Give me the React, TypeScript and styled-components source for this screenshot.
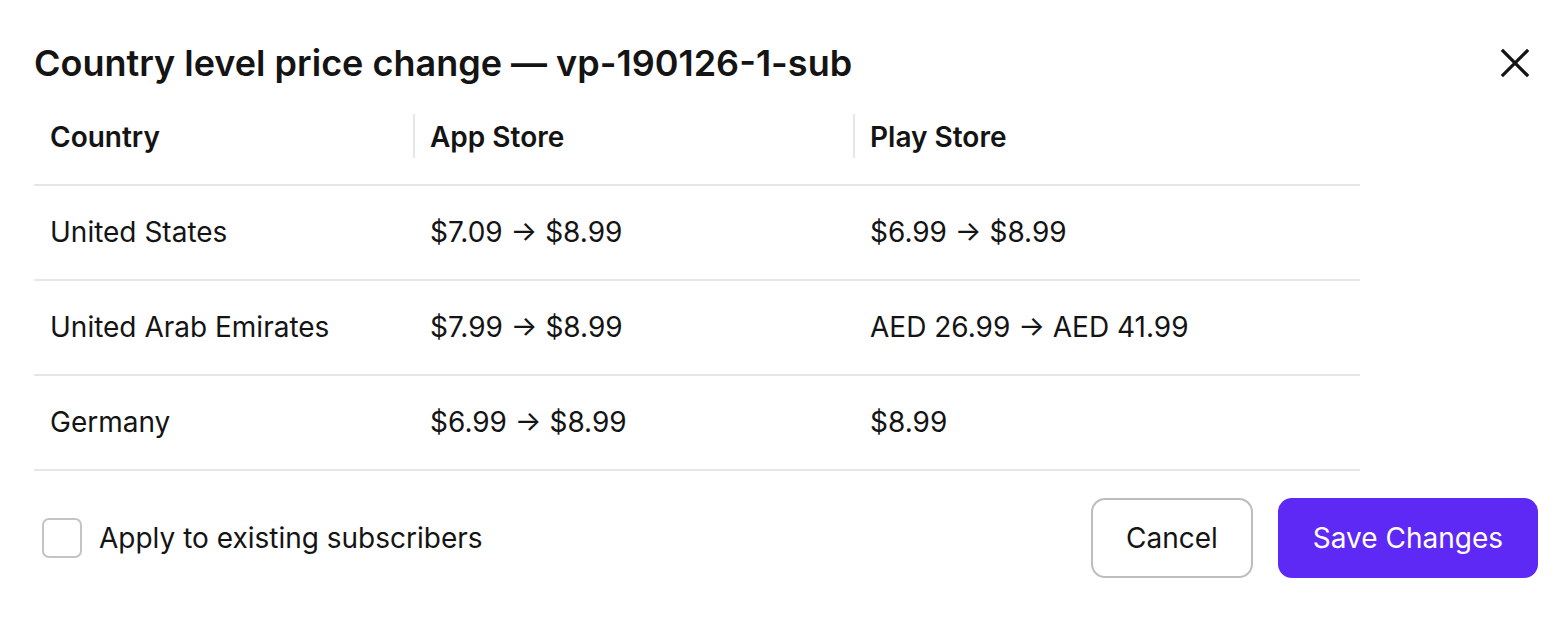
import styled, { createGlobalStyle } from "styled-components";
import { Fragment } from "react";

const GlobalStyle = createGlobalStyle`
  * { box-sizing: border-box; }
  body {
    margin: 0;
    background: #ffffff;
    font-family: Inter, "Noto Sans", sans-serif;
    color: #141414;
  }
`;

const Dialog = styled.div`
  width: 1568px;
  height: 618px;
  padding: 36px 30px 0 34px;
  display: flex;
  flex-direction: column;
`;

const Header = styled.div`
  display: flex;
  align-items: center;
  justify-content: space-between;
  height: 54px;
`;

const Title = styled.h1`
  margin: 0;
  font-size: 36px;
  font-weight: 600;
  color: #141414;
`;

const CloseButton = styled.button`
  border: none;
  background: none;
  padding: 0;
  width: 34px;
  height: 34px;
  margin-right: 6px;
  display: flex;
  align-items: center;
  justify-content: center;
  cursor: pointer;
  color: #141414;
`;

const Table = styled.div`
  width: 1326px;
  display: grid;
  grid-template-columns: 379px 440px 507px;
`;

const HeadCell = styled.div<{ $divider?: boolean }>`
  position: relative;
  height: 96px;
  display: flex;
  align-items: center;
  padding-left: ${(p) => (p.$divider ? "17px" : "16px")};
  font-size: 28px;
  font-weight: 600;
  border-bottom: 2px solid #e6e6e6;

  &::before {
    content: "";
    display: ${(p) => (p.$divider ? "block" : "none")};
    position: absolute;
    left: 0;
    top: 24px;
    height: 44px;
    width: 2px;
    background: #e6e6e6;
  }
`;

const Cell = styled.div<{ $first?: boolean }>`
  height: 95px;
  display: flex;
  align-items: center;
  padding-left: ${(p) => (p.$first ? "16px" : "17px")};
  padding-bottom: 2px;
  font-size: 28px;
  font-weight: 400;
  border-bottom: 2px solid #e6e6e6;
`;

const Footer = styled.div`
  display: flex;
  align-items: center;
  justify-content: space-between;
  margin-top: 27px;
`;

const CheckLabel = styled.label`
  display: flex;
  align-items: center;
  gap: 17px;
  padding-left: 8px;
  font-size: 28px;
  cursor: pointer;
`;

const Box = styled.span`
  width: 40px;
  height: 40px;
  border: 2px solid #c4c4c4;
  border-radius: 7px;
  background: #fff;
`;

const Actions = styled.div`
  display: flex;
  gap: 25px;
`;

const Button = styled.button<{ $primary?: boolean }>`
  height: 80px;
  padding: 0 33px;
  border-radius: 14px;
  font-family: inherit;
  font-size: 28px;
  font-weight: 400;
  cursor: pointer;
  border: 2px solid ${(p) => (p.$primary ? "#5f29f5" : "#bdbdbd")};
  background: ${(p) => (p.$primary ? "#5f29f5" : "#fff")};
  color: ${(p) => (p.$primary ? "#fff" : "#141414")};
`;

const rows = [
  { country: "United States", app: "$7.09 → $8.99", play: "$6.99 → $8.99" },
  { country: "United Arab Emirates", app: "$7.99 → $8.99", play: "AED 26.99 → AED 41.99" },
  { country: "Germany", app: "$6.99 → $8.99", play: "$8.99" },
];

export default function App() {
  return (
    <>
      <GlobalStyle />
      <Dialog>
        <Header>
          <Title>Country level price change — vp-190126-1-sub</Title>
          <CloseButton aria-label="Close">
            <svg width="30" height="30" viewBox="0 0 30 30" fill="none">
              <path d="M3 3 L27 27 M27 3 L3 27" stroke="currentColor" strokeWidth="3.2" strokeLinecap="square" />
            </svg>
          </CloseButton>
        </Header>
        <Table>
          <HeadCell>Country</HeadCell>
          <HeadCell $divider>App Store</HeadCell>
          <HeadCell $divider>Play Store</HeadCell>
          {rows.map((r) => (
            <Fragment key={r.country}>
              <Cell $first>{r.country}</Cell>
              <Cell>{r.app}</Cell>
              <Cell>{r.play}</Cell>
            </Fragment>
          ))}
        </Table>
        <Footer>
          <CheckLabel>
            <Box />
            Apply to existing subscribers
          </CheckLabel>
          <Actions>
            <Button>Cancel</Button>
            <Button $primary>Save Changes</Button>
          </Actions>
        </Footer>
      </Dialog>
    </>
  );
}
